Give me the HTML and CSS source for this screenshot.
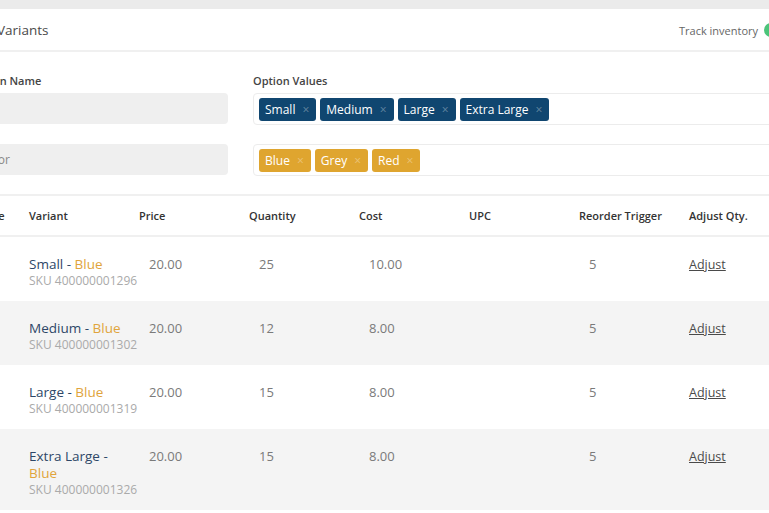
FILE: index.html
```html
<!DOCTYPE html>
<html>
<head>
<meta charset="utf-8">
<link rel="stylesheet" href="styles.css">
</head>
<body>
<div class="page">
  <div class="panel">
    <div class="panel-head">
      <div class="title">Variants</div>
      <div class="track">Track inventory <span class="toggle"></span></div>
    </div>
    <div class="options">
      <div class="opt-col name-col">
        <div class="label">Option Name</div>
        <div class="input"></div>
        <div class="input">Color</div>
      </div>
      <div class="opt-col values-col">
        <div class="label">Option Values</div>
        <div class="tagbox">
          <span class="tag navy">Small <i>×</i></span>
          <span class="tag navy">Medium <i>×</i></span>
          <span class="tag navy">Large <i>×</i></span>
          <span class="tag navy">Extra Large <i>×</i></span>
        </div>
        <div class="tagbox">
          <span class="tag gold">Blue <i>×</i></span>
          <span class="tag gold">Grey <i>×</i></span>
          <span class="tag gold">Red <i>×</i></span>
        </div>
      </div>
    </div>
    <div class="table">
      <div class="row head">
        <div class="c c-img">Image</div>
        <div class="c">Variant</div>
        <div class="c">Price</div>
        <div class="c">Quantity</div>
        <div class="c">Cost</div>
        <div class="c">UPC</div>
        <div class="c">Reorder Trigger</div>
        <div class="c">Adjust Qty.</div>
      </div>
      <div class="row">
        <div class="c c-img"></div>
        <div class="c variant"><div class="vname">Small - <span class="col">Blue</span></div><div class="sku">SKU 400000001296</div></div>
        <div class="c val">20.00</div>
        <div class="c val">25</div>
        <div class="c val">10.00</div>
        <div class="c val"></div>
        <div class="c val">5</div>
        <div class="c adj"><a>Adjust</a></div>
      </div>
      <div class="row alt">
        <div class="c c-img"></div>
        <div class="c variant"><div class="vname">Medium - <span class="col">Blue</span></div><div class="sku">SKU 400000001302</div></div>
        <div class="c val">20.00</div>
        <div class="c val">12</div>
        <div class="c val">8.00</div>
        <div class="c val"></div>
        <div class="c val">5</div>
        <div class="c adj"><a>Adjust</a></div>
      </div>
      <div class="row">
        <div class="c c-img"></div>
        <div class="c variant"><div class="vname">Large - <span class="col">Blue</span></div><div class="sku">SKU 400000001319</div></div>
        <div class="c val">20.00</div>
        <div class="c val">15</div>
        <div class="c val">8.00</div>
        <div class="c val"></div>
        <div class="c val">5</div>
        <div class="c adj"><a>Adjust</a></div>
      </div>
      <div class="row alt">
        <div class="c c-img"></div>
        <div class="c variant"><div class="vname">Extra Large - <span class="col">Blue</span></div><div class="sku">SKU 400000001326</div></div>
        <div class="c val">20.00</div>
        <div class="c val">15</div>
        <div class="c val">8.00</div>
        <div class="c val"></div>
        <div class="c val">5</div>
        <div class="c adj"><a>Adjust</a></div>
      </div>
    </div>
  </div>
</div>
</body>
</html>
```
FILE: styles.css
```css
* { box-sizing: border-box; }
html, body { margin: 0; padding: 0; }
body {
  font-family: "Open Sans", "Liberation Sans", sans-serif;
  color: #444;
  background: #fff;
}
.page {
  width: 769px;
  height: 513px;
  overflow: hidden;
  background: #ebebeb;
  padding-top: 9px;
}
.panel {
  background: #fff;
  margin-left: -45px;
  width: 900px;
  padding-bottom: 20px;
}
.panel-head {
  height: 43px;
  display: flex;
  align-items: center;
  border-bottom: 2px solid #f0f0f0;
  padding-left: 42px;
  padding-top: 1px;
}
.title {
  font-size: 13.5px;
  color: #4a4a4a;
  width: 682px;
}
.track {
  font-size: 11px;
  color: #666;
  display: flex;
  align-items: center;
  gap: 6px;
}
.toggle {
  display: inline-block;
  width: 30px;
  height: 14px;
  border-radius: 7px;
  background: #4cc47a;
}
.options {
  display: flex;
  gap: 25px;
  padding: 21px 15px 18px 15px;
  border-bottom: 2px solid #f0f0f0;
}
.opt-col { display: flex; flex-direction: column; }
.name-col { width: 258px; }
.values-col { flex: 1; }
.label {
  font-size: 11px;
  font-weight: 600;
  color: #444;
  height: 15px;
  line-height: 15px;
  margin-bottom: 5px;
}
.input {
  height: 31px;
  background: #efefef;
  border-radius: 4px;
  font-size: 12px;
  color: #888;
  line-height: 31px;
  padding-left: 10px;
  margin-bottom: 20px;
}
.input:last-child { margin-bottom: 0; }
.tagbox {
  height: 32px;
  border: 1px solid #ececec;
  border-radius: 4px;
  display: flex;
  align-items: center;
  gap: 4px;
  padding-left: 5px;
  margin-bottom: 19px;
}
.tagbox:last-child { margin-bottom: 0; }
.tag {
  display: inline-flex;
  align-items: center;
  height: 23px;
  padding: 0 7px 0 6px;
  border-radius: 3px;
  color: #fff;
  font-size: 12px;
  gap: 7px;
}
.tag i {
  font-style: normal;
  font-size: 12px;
  color: rgba(255,255,255,0.35);
}
.tag.navy { background: #104670; }
.tag.gold { background: #dfa52f; }

.row {
  display: grid;
  grid-template-columns: 74px 110px 110px 110px 110px 110px 110px 160px;
}
.row.head {
  height: 41px;
  align-items: center;
  border-bottom: 2px solid #f0f0f0;
  font-size: 11px;
  font-weight: 600;
  color: #333;
}
.row.head .c-img { padding-left: 17px; }
.row:not(.head) {
  padding-top: 19px;
  padding-bottom: 12px;
  min-height: 64px;
  align-items: start;
}
.row.alt { background: #f4f4f4; }
.c { font-size: 13px; }
.row.head .c { font-size: 11px; }
.val { padding-left: 10px; color: #7a7a7a; line-height: 17px; }
.variant { line-height: 17px; }
.vname { color: #2e4767; font-size: 13.5px; padding-right: 12px; }
.vname .col { color: #e0a43c; }
.sku { font-size: 12px; color: #aaa; line-height: 16px; }
.adj { line-height: 17px; }
.adj a { color: #4a4a4a; text-decoration: underline; font-size: 12.5px; }
```
